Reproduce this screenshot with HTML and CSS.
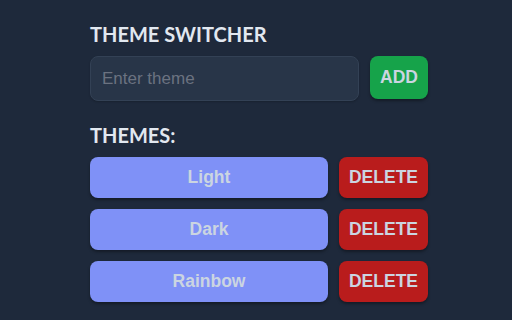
FILE: index.html
```html
<!DOCTYPE html>
<html lang="en">
<head>
  <meta charset="UTF-8" />
  <meta name="viewport" content="width=device-width, initial-scale=1.0"/>
  <title>Theme Switcher</title>
  <link rel="stylesheet" href="styles.css">
</head>
<body>
  <div class="container">
    <h2>THEME SWITCHER</h2>
    <div class="add-row">
      <input type="text" id="themeInput" placeholder="Enter theme">
      <button class="add-btn">ADD</button>
    </div>

    <h2 class="themes-title">THEMES:</h2>
    <div id="themeList">
      <div class="theme-row">
        <button class="theme-btn">Light</button>
        <button class="delete-btn">DELETE</button>
      </div>
      <div class="theme-row">
        <button class="theme-btn">Dark</button>
        <button class="delete-btn">DELETE</button>
      </div>
      <div class="theme-row">
        <button class="theme-btn">Rainbow</button>
        <button class="delete-btn">DELETE</button>
      </div>
    </div>
  </div>
</body>
</html>
```

FILE: styles.css
```css
body {
  margin: 0;
  padding: 0;
  background-color: #1e293b;
  font-family: "Liberation Sans", Arial, sans-serif;
  color: #cbd5e1;
}

.container {
  width: 338px;
  margin-left: 90px;
  padding-top: 22px;
}

h2 {
  font-family: Lato, "Open Sans", sans-serif;
  font-size: 20px;
  font-weight: 700;
  color: #e2e8f0;
  margin: 0 0 10px 0;
  line-height: 24px;
}

.themes-title {
  margin-top: 22px;
  margin-bottom: 10px;
}

.add-row {
  display: flex;
  gap: 11px;
  align-items: flex-start;
}

input {
  flex: 1;
  height: 45px;
  box-sizing: border-box;
  padding: 0 11px;
  border: 1px solid #334155;
  border-radius: 8px;
  background-color: #283548;
  color: #cbd5e1;
  font-family: "Liberation Sans", Arial, sans-serif;
  font-size: 17px;
  box-shadow: 0 1px 2px rgba(0, 0, 0, 0.2);
}

input::placeholder {
  color: #6b7280;
}

button {
  border: none;
  border-radius: 8px;
  font-family: "Liberation Sans", Arial, sans-serif;
  font-weight: bold;
  font-size: 17.5px;
  color: #cbd5e1;
  cursor: pointer;
  box-shadow: 0 2px 3px rgba(0, 0, 0, 0.35);
}

.add-btn {
  width: 58px;
  height: 43px;
  background-color: #16a34a;
}

.theme-row {
  display: flex;
  gap: 11px;
  margin-bottom: 11px;
}

.theme-btn {
  flex: 1;
  height: 41px;
  background-color: #7f91f7;
}

.delete-btn {
  width: 89px;
  height: 41px;
  background-color: #b91c1c;
}
```
